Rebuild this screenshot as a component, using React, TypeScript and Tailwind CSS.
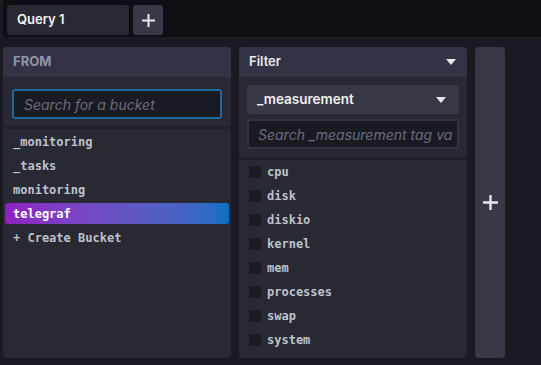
import React from "react";

const buckets = ["_monitoring", "_tasks", "monitoring", "telegraf"];
const measurements = ["cpu", "disk", "diskio", "kernel", "mem", "processes", "swap", "system"];

function Caret() {
  return (
    <svg width="10" height="6" viewBox="0 0 10 6">
      <path d="M0 0 L10 0 L5 6 Z" fill="#e7e8eb" />
    </svg>
  );
}

function Plus({ size = 14 }: { size?: number }) {
  return (
    <svg width={size} height={size} viewBox="0 0 14 14">
      <path d="M7 0 V14 M0 7 H14" stroke="#e7e8eb" strokeWidth="2.2" />
    </svg>
  );
}

export default function App() {
  return (
    <div
      className="w-[541px] h-[365px] bg-[#1a1a22] overflow-hidden pl-[3px] flex flex-col"
      style={{ fontFamily: "Inter, 'Noto Sans', sans-serif" }}
    >
      {/* query tabs */}
      <div className="h-[37px] bg-[#0f0e15] rounded-bl-[4px] flex items-start gap-[4px] pl-[4px] pt-[5px] shrink-0">
        <div className="w-[122px] h-[30px] bg-[#292933] rounded-[3px] flex items-center pl-[10px] text-[13px] font-semibold text-[#f1f1f3]">
          Query 1
        </div>
        <div className="w-[30px] h-[30px] bg-[#383846] rounded-[3px] flex items-center justify-center">
          <Plus size={13} />
        </div>
      </div>

      <div className="mt-[10px] flex gap-[8px] h-[311px]">
        {/* FROM */}
        <div className="w-[228px] bg-[#292933] rounded-[4px] flex flex-col overflow-hidden">
          <div className="h-[30px] bg-[#333346] flex items-center pl-[10px] text-[13px] font-bold text-[#9395a5]">
            FROM
          </div>
          <div className="px-[9px] pt-[12px] pb-[7px]">
            <div className="h-[30px] rounded-[3px] border-2 border-[#1d6aa3] bg-[#1a1a22] flex items-center pl-[10px] text-[14px] italic text-[#6b6d7e]">
              Search for a bucket
            </div>
          </div>
          <div className="h-[3px] bg-[#202028]" />
          <div
            className="flex flex-col px-[2px] text-[12px] font-bold text-[#bec2cc]"
            style={{ fontFamily: "'DejaVu Sans Mono', monospace" }}
          >
            {buckets.map((b) => (
              <div key={b} className="h-[24px] pt-[2px] pb-[1px]">
                {b === "telegraf" ? (
                  <div className="h-full rounded-[3px] bg-gradient-to-r from-[#8e1fc3] to-[#066fc5] flex items-center pl-[8px] text-white">
                    {b}
                  </div>
                ) : (
                  <div className="h-full flex items-center pl-[8px]">{b}</div>
                )}
              </div>
            ))}
            <div className="h-[24px] pt-[2px] pb-[1px] flex items-center pl-[8px]">+ Create Bucket</div>
          </div>
        </div>

        {/* Filter */}
        <div className="w-[228px] bg-[#292933] rounded-[4px] flex flex-col overflow-hidden">
          <div className="h-[30px] bg-[#333346] flex items-center justify-between pl-[10px] pr-[11px] text-[13px] font-semibold text-[#e7e8eb]">
            Filter
            <Caret />
          </div>
          <div className="px-[8px] pt-[8px] pb-[8px] flex flex-col gap-[5px]">
            <div className="h-[29px] bg-[#383846] rounded-[3px] flex items-center justify-between pl-[10px] pr-[13px] text-[13.5px] font-semibold text-[#f1f1f3]">
              _measurement
              <Caret />
            </div>
            <div className="h-[30px] rounded-[3px] border-2 border-[#333346] bg-[#1a1a22] flex items-center pl-[9px] text-[14px] italic text-[#6b6d7e] whitespace-nowrap overflow-hidden">
              Search _measurement tag va
            </div>
          </div>
          <div className="h-[3px] bg-[#202028]" />
          <div
            className="flex flex-col text-[12px] font-bold text-[#bec2cc]"
            style={{ fontFamily: "'DejaVu Sans Mono', monospace" }}
          >
            {measurements.map((m) => (
              <div key={m} className="h-[24px] flex items-center pl-[10px] gap-[6px]">
                <span className="w-[12px] h-[12px] rounded-[2px] bg-[#1a1a22]" />
                {m}
              </div>
            ))}
          </div>
        </div>

        {/* add function column */}
        <div className="w-[30px] bg-[#383846] rounded-[4px] flex items-center justify-center">
          <Plus size={15} />
        </div>
      </div>
    </div>
  );
}
